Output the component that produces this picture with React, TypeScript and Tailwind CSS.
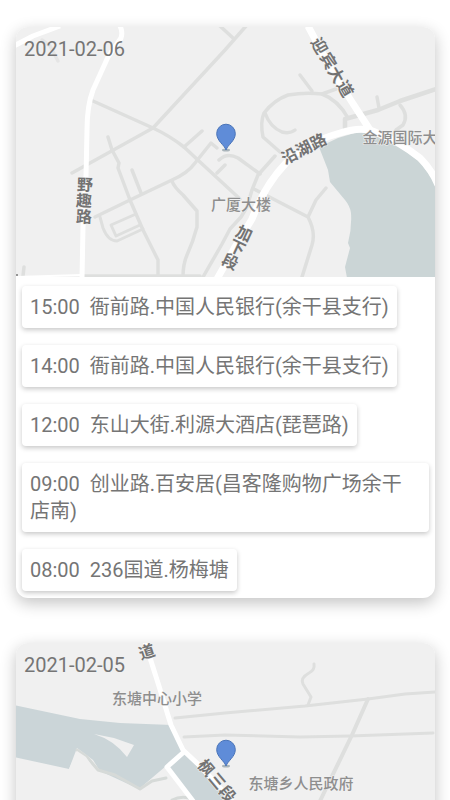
import type { ReactNode } from "react";

interface Stop {
  time: string;
  place: string;
}

interface LabelProps {
  x: number;
  y: number;
  rotate?: number;
  road?: boolean;
  children: string;
}

const DAY_ONE: Stop[] = [
  { time: "15:00", place: "衙前路.中国人民银行(余干县支行)" },
  { time: "14:00", place: "衙前路.中国人民银行(余干县支行)" },
  { time: "12:00", place: "东山大街.利源大酒店(琵琶路)" },
  { time: "09:00", place: "创业路.百安居(昌客隆购物广场余干店南)" },
  { time: "08:00", place: "236国道.杨梅塘" },
];

// x / y is the centre of the label
function Label({ x, y, rotate = 0, road = false, children }: LabelProps) {
  return (
    <text
      transform={`translate(${x} ${y}) rotate(${rotate})`}
      textAnchor="middle"
      dominantBaseline="central"
      fontSize={road ? 16 : 15}
      fontWeight={road ? 700 : 500}
      fill={road ? "#737373" : "#8e8e8e"}
      stroke="#f3f3f3"
      strokeWidth={1}
      paintOrder="stroke"
    >
      {children}
    </text>
  );
}

function Pin({ x, y }: { x: number; y: number }) {
  return (
    <g transform={`translate(${x} ${y})`}>
      <ellipse cx="0" cy="0" rx="4" ry="1.5" fill="#a9b4ba" />
      <path
        d="M0 0C-1.5-5-9.3-9-9.3-16.5A9.3 9.3 0 0 1 9.3-16.5C9.3-9 1.5-5 0 0Z"
        fill="#5f8cd8"
        stroke="#4a74b8"
        strokeWidth="1"
      />
    </g>
  );
}

function TownMap() {
  return (
    <svg viewBox="16 27 419 250" className="block w-full bg-[#f0f0f0]" role="img">
      <path
        fill="#cbd5d6"
        d="M319 147L338 138 358 132 375 134 400 147 420 162 436 184V278H347L345 267 350 248 348 243Q352 228 351 213 350 206 345 200L330 182 328 170Z"
      />
      <g fill="none" stroke="#dedfde" strokeWidth="3.5" strokeLinecap="round" strokeLinejoin="round">
        <path d="M246 26L225 50 153 128 72 173" />
        <path d="M93 101L153 128Q170 136 184 147L200 162 240 199" />
        <path d="M184 147L202 131M220 26L233 38" />
        <path d="M42 40L50 46 58 61" stroke="#e5e5e5" />
        <path d="M108 137L112 150 119 163 118 168 130 200 143 230 158 260V277" />
        <path d="M132 170L141 193" />
        <path d="M95 217L130 200 172 180Q188 173 195 163L211 143 217 148" />
        <path d="M172 181Q174 187 183 195L197 211V227Q193 242 187 255 183 264 183 277" />
        <path d="M100 217L103 228Q108 241 117 241L143 229M136 214L111 225 116 236 140 225" strokeWidth="3" />
        <path d="M217 173L225 165M219 160Q227 152 238 158L260 174" />
        <path d="M275 156L258 175 252 190 247 207 241 217 230 229 222 244 203 277" />
        <path d="M254 189L308 217Q316 232 312 245L302 277M326 188L316 200 308 217" />
        <path d="M348 118Q338 100 322 94 305 92 288 95 274 100 264 113 260 122 263 137L280 152" />
        <path d="M322 94L336 89M300 75L312 91" />
        <path d="M265 113Q270 127 282 132 290 134 295 130" />
        <path d="M345 128V119L378 110 400 101 436 89" strokeWidth="4.5" />
        <path d="M377 97L379 108M400 105Q409 115 403 125L396 130" />
        <path d="M24 267L23 276M84 276H200" />
      </g>
      <g fill="none" stroke="#fff" strokeWidth="5" strokeLinejoin="round">
        <path d="M14 46L33 36 60 26" />
        <path d="M120 26Q123 32 121 38L108 57 93 90Q87 106 87 130L86 177 83 227 82 278" />
        <path d="M16 277L82 275" strokeWidth="2" />
        <path d="M308 26L330 67 350 99 372 133" strokeWidth="7" />
        <path d="M217 279L235 247 252 219Q264 186 286 163 304 143 340 133 362 126 375 132 400 142 420 158 432 170 438 185" strokeWidth="7" />
      </g>
      <circle cx="17" cy="275" r="1" fill="#777" />
      <Label x={85} y={185} rotate={2} road>野</Label>
      <Label x={84} y={201} rotate={2} road>趣</Label>
      <Label x={84} y={217} rotate={2} road>路</Label>
      <Label x={319} y={46} rotate={60} road>迎</Label>
      <Label x={328} y={61} rotate={60} road>宾</Label>
      <Label x={336} y={75} rotate={60} road>大</Label>
      <Label x={345} y={89} rotate={60} road>道</Label>
      <Label x={304} y={149} rotate={-27} road>沿湖路</Label>
      <Label x={244} y={234} rotate={25} road>加</Label>
      <Label x={237} y={248} rotate={25} road>下</Label>
      <Label x={230} y={262} rotate={25} road>段</Label>
      <Label x={400} y={138}>金源国际大</Label>
      <Label x={241} y={205}>广厦大楼</Label>
      <Pin x={226} y={150} />
    </svg>
  );
}

function RiverMap() {
  return (
    <svg viewBox="16 643 419 250" className="block w-full bg-[#f0f0f0]" role="img">
      <path
        fill="#cbd5d8"
        d="M14 705L80 719 120 723 172 725 184 750 166 766 139 789 100 771 93 760 77 748 69 769 14 757Z"
      />
      <path fill="#f0f0f0" d="M94 734L114 738 134 745 127 757Q114 740 94 734Z" />
      <path fill="#cbd5d8" d="M168 766L185 752 235 802 270 860H220L190 800Z" />
      <g fill="none" stroke="#dedfde" strokeWidth="3" strokeLinecap="round" strokeLinejoin="round">
        <path d="M175 718L225 713 305 706 368 699 405 694 436 692" />
        <path d="M184 737L225 735 300 737 350 736 433 733" />
        <path d="M368 699L352 735 320 801 300 840" strokeWidth="4" />
        <path d="M314 664Q315 670 309 673 300 678 303 684L311 697 308 705" />
        <path d="M77 750L87 757 98 770 115 775 140 789 152 781 166 778M172 800Q182 795 192 799" stroke="#d6dad8" />
      </g>
      <path d="M69 769L77 751 86 757 93 768" fill="#f0f0f0" />
      <g fill="none" stroke="#fff" strokeWidth="5" strokeLinejoin="round">
        <path d="M145 642L158 683 171 725 183 750 200 766 240 810 280 860" />
        <path d="M185 751L167 767 193 801 230 860" />
      </g>
      <Label x={147} y={652} rotate={-18} road>道</Label>
      <Label x={157} y={699}>东塘中心小学</Label>
      <Label x={206} y={768} rotate={50} road>枫</Label>
      <Label x={217} y={781} rotate={50} road>三</Label>
      <Label x={227} y={794} rotate={50} road>段</Label>
      <Label x={301} y={784}>东塘乡人民政府</Label>
      <Pin x={226} y={766} />
    </svg>
  );
}

function DayCard({ date, map, stops }: { date: string; map: ReactNode; stops: Stop[] }) {
  return (
    <section className="rounded-xl bg-white shadow-[0_5px_16px_rgba(0,0,0,0.24)]">
      <div className="relative overflow-hidden rounded-t-xl">
        {map}
        <h2 className="absolute top-2 left-2 text-xl leading-7">{date}</h2>
      </div>
      <ul className="flex flex-col items-start gap-[17px] px-1.5 pt-[9px] pb-[7px]">
        {stops.map((stop) => (
          <li
            key={stop.time}
            className="rounded-sm bg-white px-2 pt-2 pb-[7px] text-xl leading-[27px] whitespace-pre-wrap shadow-[0_2px_5px_rgba(0,0,0,0.22)]"
          >
            <time>{stop.time}</time>
            {"  "}
            {stop.place}
          </li>
        ))}
      </ul>
    </section>
  );
}

export default function App() {
  return (
    <main className="flex h-screen flex-col gap-[45px] overflow-y-auto bg-white pt-[27px] pr-[15px] pb-8 pl-4 font-[Roboto,'Noto_Sans_CJK_SC',sans-serif] text-[#757575] [scrollbar-width:none]">
      <DayCard date="2021-02-06" map={<TownMap />} stops={DAY_ONE} />
      <DayCard date="2021-02-05" map={<RiverMap />} stops={[]} />
    </main>
  );
}
